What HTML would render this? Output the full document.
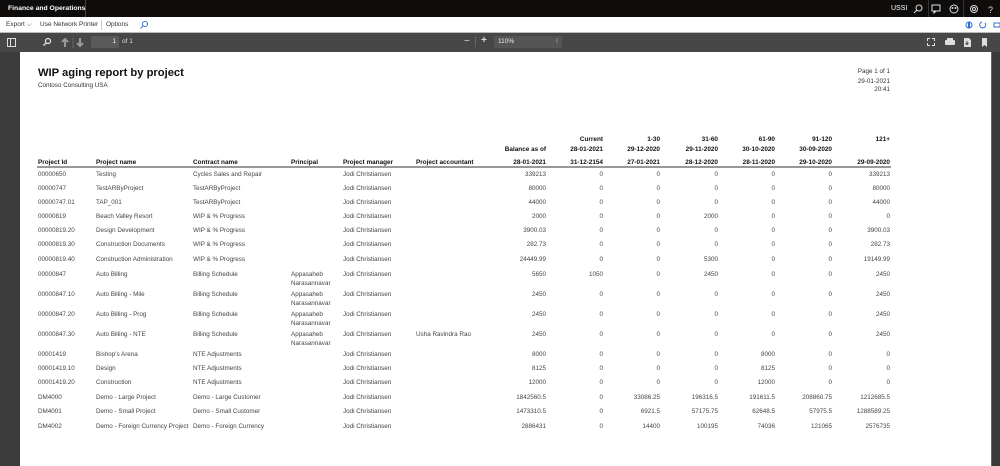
<!DOCTYPE html>
<html><head><meta charset="utf-8"><style>
*{margin:0;padding:0;box-sizing:border-box}
body{width:1000px;height:466px;position:relative;overflow:hidden;background:#fff;font-family:"Liberation Sans",sans-serif;color:#222}
.a{position:absolute;white-space:nowrap}
#top{position:absolute;left:0;top:0;width:1000px;height:17px;background:#0f0d0c}
#cmd{position:absolute;left:0;top:17px;width:1000px;height:16px;background:#fff;border-bottom:1px solid #bbb}
#tb{position:absolute;left:0;top:33px;width:1000px;height:19px;background:#474747}
#left{position:absolute;left:0;top:52px;width:20px;height:414px;background:#3c3c3c}
#sb{position:absolute;left:991px;top:52px;width:9px;height:414px;background:#3a3a3a;border-left:1px solid #666}
.t{font-size:6.3px;color:#444;line-height:9px}
.h{font-size:6.4px;font-weight:bold;color:#111;line-height:9px}
.R{text-align:right}
</style></head><body>
<div id="top"></div>
<div class="a" style="left:0;top:0;width:86px;height:17px;border-right:1px solid #444"></div>
<div class="a" style="left:8px;top:5px;font-size:6.8px;font-weight:bold;color:#fff">Finance and Operations</div>
<div class="a" style="left:891px;top:5px;font-size:7px;color:#fff">USSI</div>
<svg class="a" style="left:910px;top:3px" width="90" height="12" viewBox="0 0 90 12" fill="none" stroke="#ddd" stroke-width="1">
<circle cx="9" cy="5" r="3"/><path d="M7 7L4 10"/>
<rect x="22" y="2" width="8" height="6"/><path d="M24 8l0 2 2-2"/>
<circle cx="44" cy="6" r="4"/><circle cx="42.5" cy="5" r=".5"/><circle cx="45.5" cy="5" r=".5"/>
<circle cx="64" cy="6" r="3.5"/><circle cx="64" cy="6" r="1.5"/>
<text x="78" y="10" fill="#ddd" stroke="none" font-size="9" font-family="Liberation Sans">?</text>
</svg>
<div class="a" style="left:928px;top:0;width:1px;height:17px;background:#333"></div>
<div class="a" style="left:963px;top:0;width:1px;height:17px;background:#333"></div>
<div id="cmd"></div>
<div class="a" style="left:6px;top:21px;font-size:6.5px;color:#333">Export ⌵</div>
<div class="a" style="left:40px;top:21px;font-size:6.5px;color:#333">Use Network Printer</div>
<div class="a" style="left:101px;top:20px;width:1px;height:10px;background:#ccc"></div>
<div class="a" style="left:106px;top:21px;font-size:6.5px;color:#333">Options</div>
<svg class="a" style="left:139px;top:20px" width="10" height="10" fill="none" stroke="#3a6fd8"><circle cx="6" cy="4" r="2.5"/><path d="M4 6L1.5 8.5"/></svg>
<svg class="a" style="left:965px;top:20px" width="35" height="10" fill="none" stroke="#2b72d8">
<circle cx="4" cy="5" r="3"/><path d="M4 2v6" stroke-width="2"/><path d="M17 2a3 3 0 1 0 3 1"/><rect x="29" y="3" width="6" height="4"/></svg>
<div id="tb"></div>
<svg class="a" style="left:0;top:33px" width="160" height="19" fill="none" stroke="#ddd">
<rect x="7.5" y="5.5" width="8" height="8"/><path d="M10.5 5.5v8"/>
<circle cx="48" cy="8" r="2.5" stroke-width="1.3"/><path d="M46 10l-2.5 2.5" stroke-width="1.5"/>
<path d="M65 14V7M62 9l3-3 3 3" stroke="#999" stroke-width="2"/><path d="M73 5v10" stroke="#666"/>
<path d="M80 5v7M77 10l3 3 3-3" stroke="#999" stroke-width="2"/></svg>
<div class="a" style="left:91px;top:36px;width:28px;height:12px;background:#5a5a5a;border-radius:1px;color:#eee;font-size:6.5px;text-align:right;padding:2px 3px 0 0">1</div>
<div class="a" style="left:122px;top:38px;font-size:6.5px;color:#ddd">of 1</div>
<div class="a" style="left:464px;top:36px;color:#ddd;font-size:10px;line-height:12px">−</div>
<div class="a" style="left:475px;top:37px;width:1px;height:10px;background:#666"></div>
<div class="a" style="left:481px;top:35px;color:#ddd;font-size:10px;font-weight:bold;line-height:12px">+</div>
<div class="a" style="left:494px;top:36px;width:68px;height:12px;background:#555;color:#eee;font-size:6.5px;padding:2px 0 0 4px">110%<span style="position:absolute;right:4px;top:1px">⁝</span></div>
<svg class="a" style="left:925px;top:33px" width="75" height="19" fill="#ddd">
<path d="M2 5h3v1H3v2H2zM10 5h-3v1h2v2h1zM2 13h3v-1H3v-2H2zM10 13H7v-1h2v-2h1z"/>
<rect x="20" y="7" width="10" height="5" rx="1"/><rect x="22" y="5" width="6" height="2"/>
<path d="M39 5h5l2 2v7h-7z"/><path d="M42 8v3M40.5 10l1.5 1.5 1.5-1.5" stroke="#474747" fill="none"/>
<path d="M57 5h5v9l-2.5-2-2.5 2z"/></svg>
<div id="left"></div>
<div id="sb"></div>

<div class="a" style="left:38px;top:67px;font-size:11.2px;font-weight:bold;color:#111">WIP aging report by project</div>
<div class="a" style="left:38px;top:82px;font-size:6.3px;color:#333">Contoso Consulting USA</div>
<div class="a R" style="right:110px;top:68px;font-size:6.3px;color:#333">Page 1 of 1</div>
<div class="a R" style="right:110px;top:78px;font-size:6.3px;color:#333">29-01-2021</div>
<div class="a R" style="right:110px;top:86px;font-size:6.3px;color:#333">20:41</div>

<div id="rows"></div>
<div class="a" style="left:37px;top:166px;width:854px;height:2px;background:#999"></div>
<script>
const L=[38,96,193,291,343,416], R=[546,603,660,718,775,832,890];
let h='';
function cell(x,y,txt,cls,right){
 if(right) h+=`<div class="a ${cls} R" style="right:${1000-x}px;top:${y-4}px">${txt}</div>`;
 else h+=`<div class="a ${cls}" style="left:${x}px;top:${y-4}px">${txt}</div>`;
}
const hd1=['Current','1-30','31-60','61-90','91-120','121+'];
hd1.forEach((t,i)=>cell(R[i+1],139,t,'h',1));
const hd2=['Balance as of','28-01-2021','29-12-2020','29-11-2020','30-10-2020','30-09-2020'];
hd2.forEach((t,i)=>cell(R[i],149,t,'h',1));
['Project Id','Project name','Contract name','Principal','Project manager','Project accountant'].forEach((t,i)=>cell(L[i],162,t,'h'));
['28-01-2021','31-12-2154','27-01-2021','28-12-2020','28-11-2020','29-10-2020','29-09-2020'].forEach((t,i)=>cell(R[i],162,t,'h',1));
const JC='Jodi Christiansen',AP='Appasaheb<br>Narasannavar';
const rows=[
[174,'00000650','Testing','Cycles Sales and Repair','',JC,'',['339213','0','0','0','0','0','339213']],
[188,'00000747','TestARByProject','TestARByProject','',JC,'',['80000','0','0','0','0','0','80000']],
[202,'00000747.01','TAP_001','TestARByProject','',JC,'',['44000','0','0','0','0','0','44000']],
[216,'00000819','Beach Valley Resort','WIP &amp; % Progress','',JC,'',['2000','0','0','2000','0','0','0']],
[230,'00000819.20','Design Development','WIP &amp; % Progress','',JC,'',['3900.03','0','0','0','0','0','3900.03']],
[244,'00000819.30','Construction Documents','WIP &amp; % Progress','',JC,'',['282.73','0','0','0','0','0','282.73']],
[259,'00000819.40','Construction Administration','WIP &amp; % Progress','',JC,'',['24449.99','0','0','5300','0','0','19149.99']],
[274,'00000847','Auto Billing','Billing Schedule',AP,JC,'',['5650','1050','0','2450','0','0','2450']],
[294,'00000847.10','Auto Billing - Mile','Billing Schedule',AP,JC,'',['2450','0','0','0','0','0','2450']],
[314,'00000847.20','Auto Billing - Prog','Billing Schedule',AP,JC,'',['2450','0','0','0','0','0','2450']],
[334,'00000847.30','Auto Billing - NTE','Billing Schedule',AP,JC,'Usha Ravindra Rao',['2450','0','0','0','0','0','2450']],
[354,'00001419',"Bishop's Arena",'NTE Adjustments','',JC,'',['8000','0','0','0','8000','0','0']],
[368,'00001419.10','Design','NTE Adjustments','',JC,'',['8125','0','0','0','8125','0','0']],
[382,'00001419.20','Construction','NTE Adjustments','',JC,'',['12000','0','0','0','12000','0','0']],
[397,'DM4000','Demo - Large Project','Demo - Large Customer','',JC,'',['1842560.5','0','33086.25','196316.5','191611.5','208860.75','1212685.5']],
[411,'DM4001','Demo - Small Project','Demo - Small Customer','',JC,'',['1473310.5','0','6921.5','57175.75','62648.5','57975.5','1288589.25']],
[426,'DM4002','Demo - Foreign Currency Project','Demo - Foreign Currency','',JC,'',['2886431','0','14400','100195','74036','121065','2576735']]];
rows.forEach(r=>{const y=r[0];for(let i=0;i<6;i++)if(r[i+1])cell(L[i],y,r[i+1],'t');r[7].forEach((v,i)=>cell(R[i],y,v,'t',1));});
document.getElementById('rows').innerHTML=h;
</script>
</body></html>
